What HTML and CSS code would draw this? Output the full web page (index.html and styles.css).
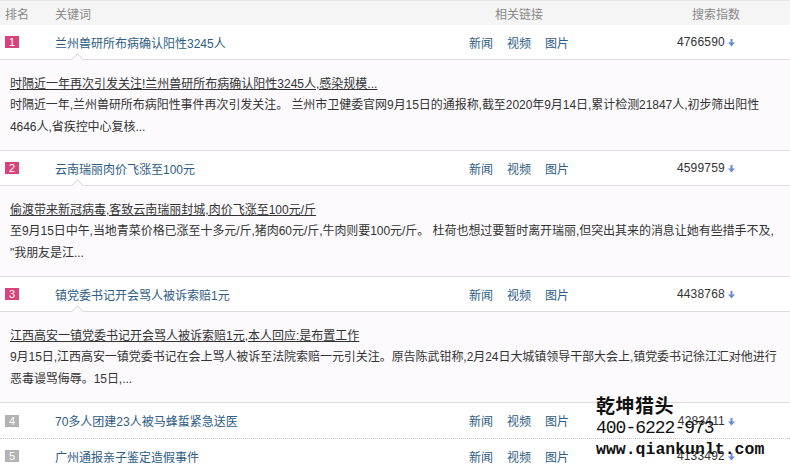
FILE: index.html
```html
<!DOCTYPE html>
<html lang="zh-CN">
<head>
<meta charset="utf-8">
<title>搜索风云榜</title>
<link rel="stylesheet" href="styles.css">
</head>
<body>
<div class="board">
  <div class="head grid">
    <span class="c-rank">排名</span>
    <span class="c-kw">关键词</span>
    <span class="c-links">相关链接</span>
    <span class="c-idx">搜索指数</span>
  </div>

  <div class="item open">
    <div class="row grid">
      <span class="c-rank"><i class="badge hot">1</i></span>
      <a class="c-kw kw" href="#">兰州兽研所布病确认阳性3245人</a>
      <span class="c-links"><a href="#">新闻</a><a href="#">视频</a><a href="#">图片</a></span>
      <span class="c-idx">4766590<svg class="down" width="7" height="8" viewBox="0 0 7 8"><rect x="2.5" y="0" width="2" height="4"/><polygon points="0,3.5 7,3.5 3.5,7.5"/></svg></span>
    </div>
    <div class="detail">
      <a class="d-title" href="#">时隔近一年再次引发关注!兰州兽研所布病确认阳性3245人,感染规模...</a>
      <p class="d-text">时隔近一年,兰州兽研所布病阳性事件再次引发关注。 兰州市卫健委官网9月15日的通报称,截至2020年9月14日,累计检测21847人,初步筛出阳性<br>4646人,省疾控中心复核...</p>
    </div>
  </div>

  <div class="item open">
    <div class="row grid">
      <span class="c-rank"><i class="badge hot">2</i></span>
      <a class="c-kw kw" href="#">云南瑞丽肉价飞涨至100元</a>
      <span class="c-links"><a href="#">新闻</a><a href="#">视频</a><a href="#">图片</a></span>
      <span class="c-idx">4599759<svg class="down" width="7" height="8" viewBox="0 0 7 8"><rect x="2.5" y="0" width="2" height="4"/><polygon points="0,3.5 7,3.5 3.5,7.5"/></svg></span>
    </div>
    <div class="detail">
      <a class="d-title" href="#">偷渡带来新冠病毒,客致云南瑞丽封城,肉价飞涨至100元/斤</a>
      <p class="d-text">至9月15日中午,当地青菜价格已涨至十多元/斤,猪肉60元/斤,牛肉则要100元/斤。 杜荷也想过要暂时离开瑞丽,但突出其来的消息让她有些措手不及,<br>"我朋友是江...</p>
    </div>
  </div>

  <div class="item open">
    <div class="row grid">
      <span class="c-rank"><i class="badge hot">3</i></span>
      <a class="c-kw kw" href="#">镇党委书记开会骂人被诉索赔1元</a>
      <span class="c-links"><a href="#">新闻</a><a href="#">视频</a><a href="#">图片</a></span>
      <span class="c-idx">4438768<svg class="down" width="7" height="8" viewBox="0 0 7 8"><rect x="2.5" y="0" width="2" height="4"/><polygon points="0,3.5 7,3.5 3.5,7.5"/></svg></span>
    </div>
    <div class="detail">
      <a class="d-title" href="#">江西高安一镇党委书记开会骂人被诉索赔1元,本人回应:是布置工作</a>
      <p class="d-text">9月15日,江西高安一镇党委书记在会上骂人被诉至法院索赔一元引关注。原告陈武钳称,2月24日大城镇领导干部大会上,镇党委书记徐江汇对他进行<br>恶毒谩骂侮辱。15日,...</p>
    </div>
  </div>

  <div class="item dotted">
    <div class="row grid">
      <span class="c-rank"><i class="badge">4</i></span>
      <a class="c-kw kw" href="#">70多人团建23人被马蜂蜇紧急送医</a>
      <span class="c-links"><a href="#">新闻</a><a href="#">视频</a><a href="#">图片</a></span>
      <span class="c-idx">4283411<svg class="down" width="7" height="8" viewBox="0 0 7 8"><rect x="2.5" y="0" width="2" height="4"/><polygon points="0,3.5 7,3.5 3.5,7.5"/></svg></span>
    </div>
  </div>

  <div class="item">
    <div class="row grid">
      <span class="c-rank"><i class="badge">5</i></span>
      <a class="c-kw kw" href="#">广州通报亲子鉴定造假事件</a>
      <span class="c-links"><a href="#">新闻</a><a href="#">视频</a><a href="#">图片</a></span>
      <span class="c-idx">4133492<svg class="down" width="7" height="8" viewBox="0 0 7 8"><rect x="2.5" y="0" width="2" height="4"/><polygon points="0,3.5 7,3.5 3.5,7.5"/></svg></span>
    </div>
  </div>

  <div class="watermark">
    <div class="wm-name">乾坤猎头</div>
    <div class="wm-tel">400-6222-973</div>
    <div class="wm-url">www.qiankunlt.com</div>
  </div>
</div>
</body>
</html>
```

FILE: styles.css
```css
* { box-sizing: border-box; }
html, body { margin: 0; padding: 0; background: #fff; }
body {
  font-family: "Liberation Sans", "Noto Sans CJK SC", sans-serif;
  font-size: 12px;
  color: #333;
}
a { text-decoration: none; }

.board {
  position: relative;
  width: 790px;
  height: 472px;
  overflow: hidden;
}

.grid {
  display: grid;
  grid-template-columns: 55px 1fr 150px 196px;
  align-items: center;
}

.head {
  height: 25px;
  background: #f5f5f5;
  border-top: 1px solid #e6e6e6;
  color: #888;
}
.head .c-rank { padding-left: 5px; }
.head .c-links { text-align: center; }
.head .c-idx { text-align: right; padding-right: 50px; color: #888; letter-spacing: 0; }

.item { position: relative; }

.row {
  height: 35px;
  border-bottom: 1px solid #dcdcdc;
  background: #fff;
  position: relative;
}
.item.dotted .row { border-bottom: 1px dotted #c8c8c8; height: 36px; }
.item:last-of-type .row { border-bottom: none; }

.c-rank { padding-left: 5px; display: flex; align-items: center; }

.badge {
  display: inline-block;
  width: 14px;
  height: 12px;
  line-height: 12px;
  text-align: center;
  font-style: normal;
  font-size: 11px;
  color: #fff;
  background: #b3b3b3;
}
.badge.hot { background: #d9437a; }

.kw { color: #2d5c85; }

.c-links {
  display: flex;
  justify-content: center;
  gap: 14px;
}
.c-links a { color: #2d5c85; }

.c-idx {
  text-align: right;
  padding-right: 55px;
  color: #333;
  letter-spacing: 0.2px;
}
.down {
  fill: #6a8dd2;
  margin-left: 3px;
  vertical-align: -1px;
}

.open .row::after {
  content: "";
  position: absolute;
  left: 73px;
  bottom: -5px;
  width: 8px;
  height: 8px;
  background: #fcfafd;
  border-top: 1px solid #dcdcdc;
  border-left: 1px solid #dcdcdc;
  transform: rotate(45deg);
}

.detail {
  height: 91px;
  padding: 14px 0 0 10px;
  background: #fcfafd;
  border-bottom: 1px solid #dcdcdc;
  overflow: hidden;
}
.d-title {
  display: block;
  line-height: 20px;
  color: #333;
  text-decoration: underline;
}
.d-text {
  margin: 0;
  line-height: 22px;
  color: #333;
  white-space: nowrap;
  letter-spacing: -0.05px;
}

.watermark {
  position: absolute;
  left: 596px;
  top: 393px;
  color: #111;
  pointer-events: none;
}
.wm-name {
  font-family: "Noto Sans CJK SC", sans-serif;
  font-weight: 700;
  font-size: 19px;
  line-height: 24px;
  letter-spacing: 0.5px;
}
.wm-tel {
  font-family: "Liberation Mono", "DejaVu Sans Mono", monospace;
  font-size: 18px;
  line-height: 22px;
  letter-spacing: -1px;
}
.wm-url {
  font-family: "Liberation Mono", "DejaVu Sans Mono", monospace;
  font-weight: 700;
  font-size: 16.5px;
  line-height: 22px;
}
```
